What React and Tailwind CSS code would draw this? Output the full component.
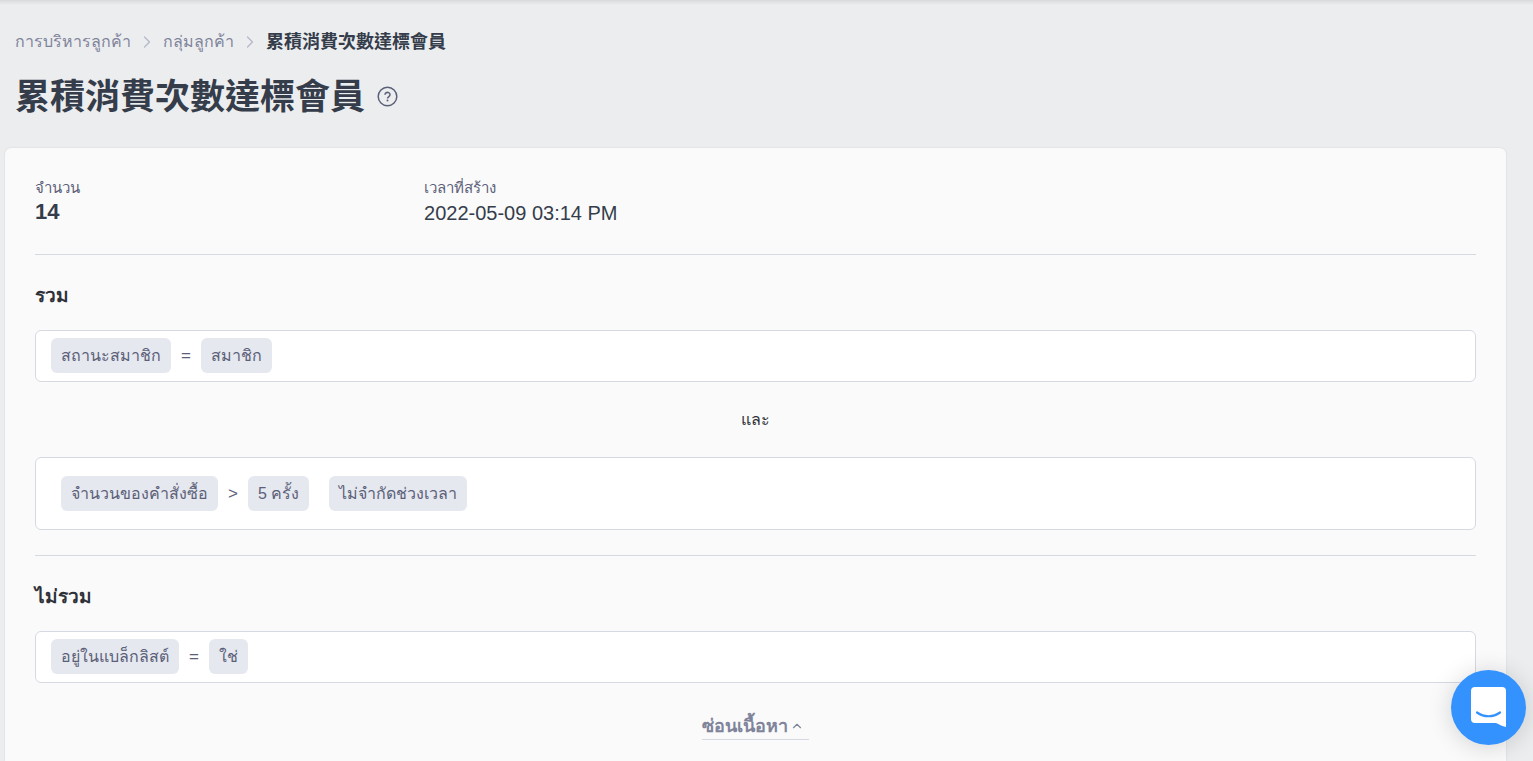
import { ChevronRight, ChevronUp } from 'lucide-react';

function Chip({ children }) {
  return (
    <span className="flex h-[35px] items-center rounded-md bg-[#e5e8ef] px-[10px] text-[#5b6078]">
      {children}
    </span>
  );
}

function Operator({ children }) {
  return <span className="px-[10px] text-[17px] text-[#5b6078]">{children}</span>;
}

function Condition({ nested = false, children }) {
  return (
    <div
      className={
        nested
          ? 'flex items-center rounded-md border border-[#d5dae2] bg-white px-[25px] py-[18px]'
          : 'flex items-center rounded-md border border-[#d5dae2] bg-white px-[15px] pt-[7px] pb-[8px]'
      }
    >
      {children}
    </div>
  );
}

function SectionTitle({ children }) {
  return <h2 className="pt-[29px] pb-[22px] text-[19px] leading-6 font-bold text-[#2e3238]">{children}</h2>;
}

function Separator() {
  return <ChevronRight className="mx-[6px] size-5 text-[#b4b9c8]" strokeWidth={1.5} aria-hidden="true" />;
}

export default function App() {
  return (
    <div className="min-h-screen bg-[#ecedef] font-['Liberation_Sans','Noto_Sans_CJK_TC',sans-serif] text-base text-[#353d4b]">
      <div className="h-[5px] bg-linear-to-b from-[#d9dadc] to-[#ecedef]" />

      <header className="px-[15px] pt-[25px] pb-[27px]">
        <nav aria-label="Breadcrumb" className="flex h-6 items-center text-[#7f849b]">
          <a href="#customers">การบริหารลูกค้า</a>
          <Separator />
          <a href="#segments">กลุ่มลูกค้า</a>
          <Separator />
          <span className="text-[18px] font-bold text-[#353d4b]" aria-current="page">
            累積消費次數達標會員
          </span>
        </nav>
        <div className="mt-[19px] flex h-12 items-center gap-[12px]">
          <h1 className="text-[35px] leading-[48px] font-bold">累積消費次數達標會員</h1>
          <button type="button" aria-label="Help" className="text-[#5b6078]">
            <svg viewBox="0 0 22 22" className="block size-[22px]" fill="none" stroke="currentColor" strokeWidth="1.5">
              <circle cx="10.500" cy="10.500" r="9.300" />
              <path d="M8 8.700a2.500 2.300 0 1 1 3.900 1.900c-.9.600-1.400 1-1.400 2" strokeWidth="1.500" />
              <circle cx="10.500" cy="14.600" r="1" fill="currentColor" stroke="none" />
            </svg>
          </button>
        </div>
      </header>

      <main className="mr-[27px] ml-[5px] rounded-t-md bg-[#fafafa] px-[30px] pt-[30px] pb-[21px] shadow-[0_0_2px_rgba(0,0,0,0.12)]">
        <dl className="flex pb-[26px]">
          <div className="w-[27%]">
            <dt className="text-[15px] leading-5 text-[#5b6078]">จำนวน</dt>
            <dd className="text-[22px] leading-7 font-bold">14</dd>
          </div>
          <div>
            <dt className="text-[15px] leading-5 text-[#5b6078]">เวลาที่สร้าง</dt>
            <dd className="text-[20px] leading-[30px]">2022-05-09 03:14 PM</dd>
          </div>
        </dl>

        <section className="border-t border-[#d5dae2] pb-[25px]">
          <SectionTitle>รวม</SectionTitle>
          <Condition>
            <Chip>สถานะสมาชิก</Chip>
            <Operator>=</Operator>
            <Chip>สมาชิก</Chip>
          </Condition>
          <p className="pt-[26px] pb-[25px] text-center leading-6 text-[#2e3238]">และ</p>
          <Condition nested>
            <Chip>จำนวนของคำสั่งซื้อ</Chip>
            <Operator>&gt;</Operator>
            <div className="flex gap-5">
              <Chip>5 ครั้ง</Chip>
              <Chip>ไม่จำกัดช่วงเวลา</Chip>
            </div>
          </Condition>
        </section>

        <section className="border-t border-[#d5dae2]">
          <SectionTitle>ไม่รวม</SectionTitle>
          <Condition>
            <Chip>อยู่ในแบล็กลิสต์</Chip>
            <Operator>=</Operator>
            <Chip>ใช่</Chip>
          </Condition>
        </section>

        <div className="flex justify-center pt-[30px]">
          <button
            type="button"
            className="flex h-[27px] items-center gap-[2px] border-b border-[#d5dae2] pr-[5px] text-[18px] font-bold text-[#7f849b]"
          >
            ซ่อนเนื้อหา
            <ChevronUp className="size-[14px]" strokeWidth={2} aria-hidden="true" />
          </button>
        </div>
      </main>

      <button
        type="button"
        aria-label="Open chat"
        className="fixed right-[7px] bottom-4 flex size-[75px] items-center justify-center rounded-full bg-[#3392fd] shadow-[0_2px_24px_rgba(0,0,0,0.16)]"
      >
        <svg viewBox="0 0 35 40" className="mb-[2px] h-10 w-[35px]" fill="none">
          <path d="M4 0h27a4 4 0 0 1 4 4v36c-4-1-7-2.500-10-4H4a4 4 0 0 1-4-4V4a4 4 0 0 1 4-4z" fill="#fff" />
          <path d="M6 25.500c7 5 16 5 23 0" stroke="#3392fd" strokeWidth="2.200" strokeLinecap="round" />
        </svg>
      </button>
    </div>
  );
}
